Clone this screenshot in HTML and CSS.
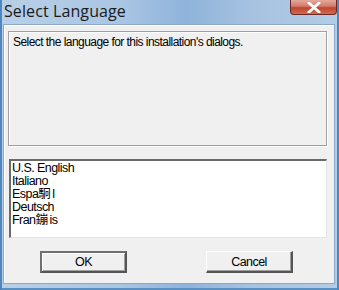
FILE: index.html
```html
<!DOCTYPE html>
<html>
<head>
<meta charset="utf-8">
<link rel="stylesheet" href="styles.css">
</head>
<body>
<div class="window">
  <div class="titlebar">
    <span class="title">Select Language</span>
    <div class="close">
      <svg width="16" height="11" viewBox="0 0 16 11"><path d="M3 1 L13 10 M13 1 L3 10" stroke="#fff" stroke-width="2.8" stroke-linecap="square"/></svg>
    </div>
  </div>
  <div class="client">
    <div class="panel">Select the language for this installation's dialogs.</div>
    <div class="listbox">
      <div class="item">U.S. English</div>
      <div class="item">Italiano</div>
      <div class="item">Espa<span class="cjk">駉</span>l</div>
      <div class="item">Deutsch</div>
      <div class="item">Fran<span class="cjk">鏰</span>is</div>
    </div>
    <div class="buttons">
      <div class="btn default">OK</div>
      <div class="btn">Cancel</div>
    </div>
  </div>
</div>
</body>
</html>
```
FILE: styles.css
```css
html, body {
  margin: 0;
  padding: 0;
  width: 339px;
  height: 290px;
  overflow: hidden;
}
.window {
  width: 339px;
  height: 290px;
  box-sizing: border-box;
  padding: 0 4px 6px 3px;
  display: flex;
  flex-direction: column;
  background: linear-gradient(90deg, #b9cfe6 0%, #aac6e3 35%, #8fb3da 55%, #a7c3e1 75%, #b3cce6 100%);
  box-shadow: inset 2px 0 0 #4f86bd, inset -2px 0 0 #4f86bd, inset 0 -2px 0 #5b8fc2;
}
.titlebar {
  height: 24px;
  flex: none;
  position: relative;
  display: flex;
  align-items: center;
}
.title {
  font-family: "Open Sans", "Noto Sans", sans-serif;
  font-size: 16px;
  letter-spacing: 0.1px;
  color: #1a1a1a;
  padding-left: 1px;
  margin-top: -3px;
}
.close {
  position: absolute;
  right: -2px;
  top: 0;
  width: 47px;
  height: 15px;
  box-sizing: border-box;
  border: 1px solid #6b2a22;
  border-top: none;
  border-radius: 0 0 4px 4px;
  background: linear-gradient(180deg, #e6a89c 0%, #d1796a 45%, #c04530 55%, #cf6a52 100%);
  display: flex;
  align-items: center;
  justify-content: center;
}
.client {
  flex: 1;
  background: #f0f0f0;
  border: 1px solid #8ba9c9;
  box-shadow: inset 1px 1px 0 #fff;
  display: flex;
  flex-direction: column;
  padding: 6px 7px 0 4px;
  font-family: "Liberation Sans", Arial, "Noto Sans CJK SC", sans-serif;
  font-size: 12px;
  letter-spacing: -0.55px;
  color: #000;
}
.panel {
  height: 115px;
  box-sizing: border-box;
  border: 1px solid #a0a0a0;
  box-shadow: 1px 1px 0 #fff, inset 1px 1px 0 #fff;
  padding: 4px 4px;
  line-height: 13px;
}
.listbox {
  margin-top: 13px;
  margin-left: 1px;
  height: 79px;
  box-sizing: border-box;
  background: #fff;
  border-top: 2px solid #6a6a6a;
  border-left: 2px solid #6a6a6a;
  border-right: 1px solid #e4e4e4;
  border-bottom: 1px solid #e4e4e4;
  padding: 1px 1px;
  font-size: 12.5px;
  line-height: 13px;
}
.item {
  white-space: nowrap;
}
.cjk {
  letter-spacing: 1.5px;
}
.buttons {
  display: flex;
  margin-top: 13px;
  padding-left: 32px;
  gap: 79px;
}
.btn {
  width: 87px;
  height: 22px;
  box-sizing: border-box;
  display: flex;
  align-items: center;
  justify-content: center;
  font-size: 12.5px;
  background: #f0f0f0;
  border-top: 1px solid #fff;
  border-left: 1px solid #fff;
  border-right: 2px solid #555;
  border-bottom: 2px solid #555;
  box-shadow: inset -1px -1px 0 #a0a0a0;
}
.btn.default {
  border: 2px solid #555;
  border-top-color: #707070;
  border-left-color: #707070;
  box-shadow: inset 1px 1px 0 #fff, inset -1px -1px 0 #a0a0a0;
}
```
